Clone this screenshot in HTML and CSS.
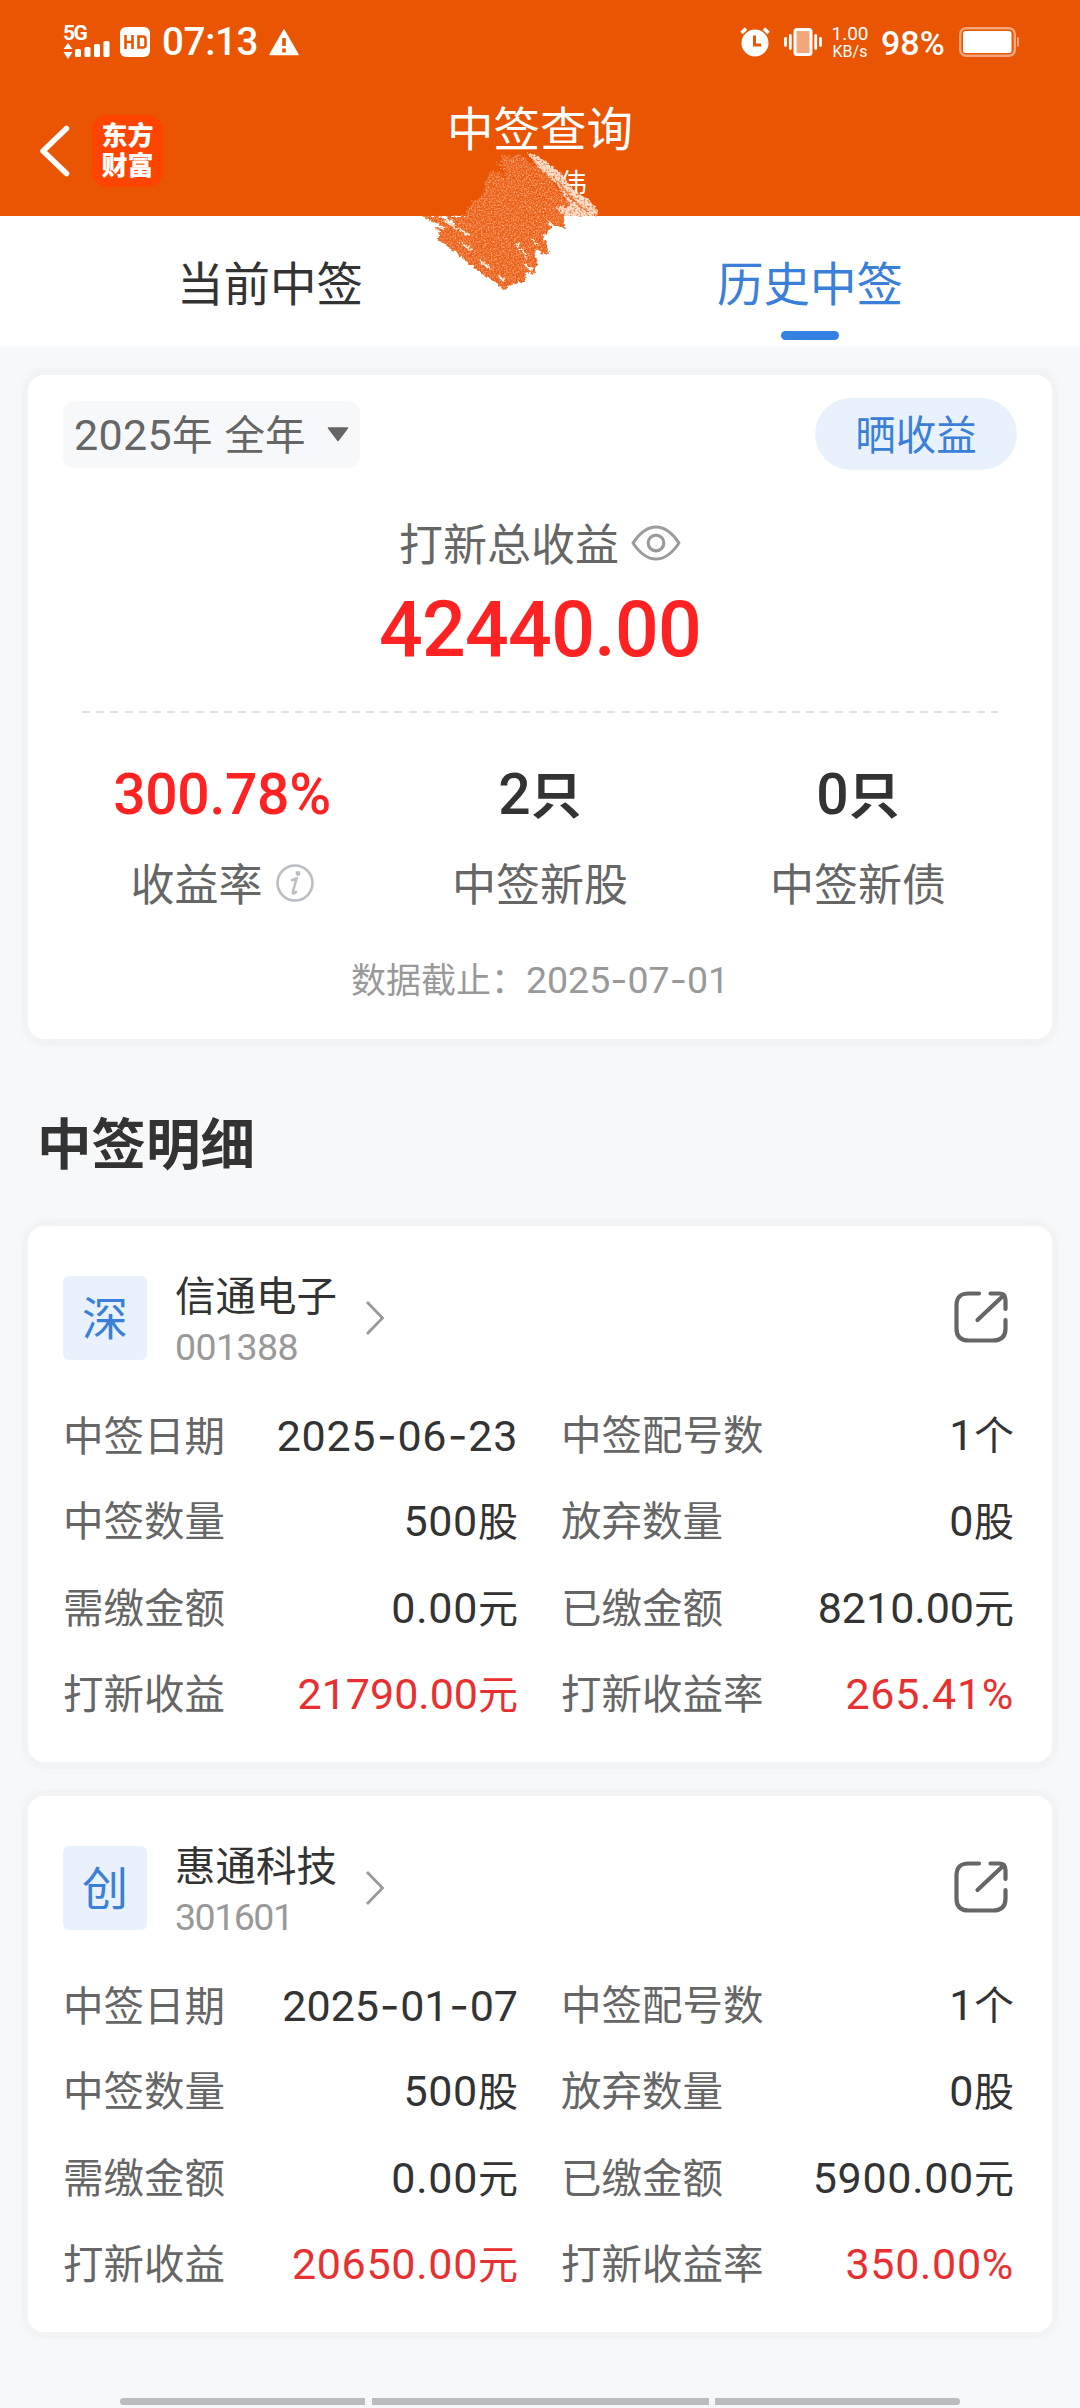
FILE: index.html
```html
<!DOCTYPE html>
<html lang="zh-CN">
<head>
<meta charset="utf-8">
<title>中签查询</title>
<link rel="stylesheet" href="styles.css">
</head>
<body>
<header class="header">
  <div class="status">
    <div class="status-left">
      <div class="signal">
        <span class="signal-type">5G</span>
        <svg width="48" height="16" viewBox="0 0 48 16" fill="#fff"><path d="M5 0 9.500 6H.5zM5 16 9.500 9H.5z"/><rect x="12" y="6" width="6" height="8" rx="1.500"/><rect x="21.500" y="4" width="6" height="10" rx="1.500"/><rect x="31" y="1" width="6" height="13" rx="1.500"/><rect x="40.500" y="-2" width="6" height="16" rx="1.500"/></svg>
      </div>
      <svg class="hd" width="30" height="30" viewBox="0 0 30 30"><rect width="30" height="30" rx="6" fill="#fff"/><path d="M5.500 8v14M12.500 8v14M5.500 15h7M18.500 9.500h4.500q2.500 0 2.500 2.500v6q0 2.500-2.500 2.500h-4.500z" fill="none" stroke="#ea5504" stroke-width="2.600"/></svg>
      <span class="clock">07:13</span>
      <svg class="warn" width="30" height="27" viewBox="0 0 30 27"><path d="M15 1 29 25.500H1z" fill="#fff" stroke="#fff" stroke-width="1.500" stroke-linejoin="round"/><path d="M15 9v8M15 19.500v4" stroke="#ea5504" stroke-width="3.600"/></svg>
    </div>
    <div class="status-right">
      <svg width="30" height="30" viewBox="0 0 30 30"><circle cx="15" cy="16" r="13.500" fill="#fff"/><path d="M1.500 6 6 1.500M24 1.500 28.500 6" stroke="#fff" stroke-width="3.500"/><path d="M14.500 8.500V18H21" fill="none" stroke="#ea5504" stroke-width="3"/></svg>
      <svg class="vibrate" width="38" height="28" viewBox="0 0 38 28"><rect x="11" y="1.500" width="16" height="25" rx="2" fill="#f5a77c" stroke="#fff" stroke-width="3"/><path d="M1.500 10.500v7M6.300 7.500v13M31.700 7.500v13M36.500 10.500v7" stroke="#fff" stroke-width="2.800" stroke-linecap="round"/></svg>
      <div class="speed"><span class="speed-num">1.00</span><span class="speed-unit">KB/s</span></div>
      <span class="percent">98%</span>
      <svg class="battery" width="61" height="30" viewBox="0 0 61 30"><rect x="1.200" y="1.200" width="54.600" height="27.600" rx="6" fill="none" stroke="#f6a67c" stroke-width="2.400"/><rect x="4" y="4" width="48.500" height="22" rx="2.500" fill="#fff"/><rect x="58" y="10.500" width="2" height="9" fill="#f6a67c"/></svg>
    </div>
  </div>
  <div class="titlebar">
    <div class="title-side">
      <svg width="31" height="52" viewBox="0 0 31 52"><path d="M27.500 3.500 4 26l23.500 22.500" fill="none" stroke="#fff" stroke-width="5.500" stroke-linecap="round" stroke-linejoin="round"/></svg>
      <div class="logo"><span>东方</span><span>财富</span></div>
    </div>
    <div class="title-text">
      <h1 class="title">中签查询</h1>
      <p class="owner">伟</p>
    </div>
  </div>
  <svg class="scribble" width="240" height="220" viewBox="0 0 240 220">
    <defs>
      <filter id="crayon" x="-5%" y="-5%" width="110%" height="110%" color-interpolation-filters="sRGB">
        <feTurbulence type="fractalNoise" baseFrequency=".3" numOctaves="2" seed="4" result="wave"/>
        <feDisplacementMap in="SourceGraphic" in2="wave" scale="7" xChannelSelector="R" yChannelSelector="G" result="rough"/>
        <feTurbulence type="fractalNoise" baseFrequency=".6" numOctaves="2" seed="9" result="grain"/>
        <feColorMatrix in="grain" values="0 0 0 0 .98  0 0 0 0 .66  0 0 0 0 .46  2.400 0 0 0 -.95" result="specks"/>
        <feComposite in="specks" in2="rough" operator="in" result="dust"/>
        <feMerge><feMergeNode in="rough"/><feMergeNode in="dust"/></feMerge>
      </filter>
      <filter id="chalk" x="-5%" y="-5%" width="110%" height="110%" color-interpolation-filters="sRGB">
        <feTurbulence type="fractalNoise" baseFrequency=".5" numOctaves="2" seed="3" result="grain"/>
        <feDisplacementMap in="SourceGraphic" in2="grain" scale="5" xChannelSelector="R" yChannelSelector="G" result="rough"/>
        <feColorMatrix in="grain" values="0 0 0 0 .94  0 0 0 0 .5  0 0 0 0 .25  3.500 0 0 0 -1.600" result="specks"/>
        <feComposite in="specks" in2="rough" operator="in" result="dust"/>
        <feMerge><feMergeNode in="rough"/><feMergeNode in="dust"/></feMerge>
      </filter>
    </defs>
    <g filter="url(#chalk)" fill="#ffe1d0">
      <path d="M129 63 140 66 163 83 176 101 191 110 200 121 199 126H163L155 116 171 115 159 94 145 83z"/>
      <path d="M165 103 190 122M155 87 184 119" stroke="#ea6b2b" stroke-width="1.200"/>
    </g>
    <g filter="url(#crayon)">
      <path fill="#ea5f18" d="M103 64 116 67 120 63 134 74 151 87 172 116 157 116 166 128 167 138 153 135 150 142 144 146 150 158 149 165 137 160 139 171 136 184 129 181 126 192 112 194 107 200 97 192 78 180 64 167 38 148 42 145 39 138 50 139 24 126 42 126 61 139 48 126 67 126 72 115 85 105 89 87 95 80 107 86z"/>
      <path d="M97 71 123 94M124 76 157 104M99 82 109 91M92 94 118 118M128 92 148 112M80 112 96 128" stroke="#ea5504" stroke-width="2" fill="none"/>
      <path d="M47 131 71 145M63 152 74 161M82 170 93 179M118 153 129 168M126 173 134 181M101 187 107 191M150 131 156 136M134 149 139 155" stroke="#fff" stroke-width="2.200" fill="none"/>
    </g>
  </svg>
</header>
<nav class="tabs">
  <a class="tab">当前中签</a>
  <a class="tab tab-active">历史中签</a>
</nav>
<main class="content">
  <section class="card summary">
    <div class="toolbar">
      <div class="period"><span class="period-text"><span class="num">2025</span>年 全年</span><svg width="22" height="15" viewBox="0 0 22 15"><path d="M1.500 1h19L11 13.500z" fill="#666" stroke="#666" stroke-width="1.500" stroke-linejoin="round"/></svg></div>
      <a class="share-btn">晒收益</a>
    </div>
    <div class="total-label">打新总收益<svg width="50" height="36" viewBox="0 0 50 36" fill="none" stroke="#9b9b9b"><path d="M2 18C9 7.500 16.500 2 25 2S41 7.500 48 18C41 28.500 33.500 34 25 34S9 28.500 2 18z" stroke-width="3" stroke-linejoin="round"/><circle cx="25" cy="18" r="7.800" stroke-width="3.200"/></svg></div>
    <div class="total">42440.00</div>
    <div class="divider"></div>
    <div class="stats">
      <div class="stat"><div class="stat-value red">300.78%</div><div class="stat-label">收益率<svg width="38" height="38" viewBox="0 0 38 38"><circle cx="19" cy="19" r="17.500" fill="none" stroke="#b9bdc4" stroke-width="2.600"/><circle cx="22" cy="9.500" r="2.400" fill="#b9bdc4"/><path d="M15 16.500q3-1 5.500-2l-3.600 13.200q-.6 3 2 1.300l2-1.800" fill="none" stroke="#b9bdc4" stroke-width="2.500"/></svg></div></div>
      <div class="stat"><div class="stat-value">2<span class="zhi">只</span></div><div class="stat-label">中签新股</div></div>
      <div class="stat"><div class="stat-value">0<span class="zhi">只</span></div><div class="stat-label">中签新债</div></div>
    </div>
    <div class="asof">数据截止：<span class="asof-date">2025<b>-</b>07<b>-</b>01</span></div>
  </section>
  <h2 class="section-title">中签明细</h2>
  <section class="card detail">
    <div class="stock">
      <span class="badge">深</span>
      <div class="stock-id"><span class="name">信通电子</span><span class="code">001388</span></div>
      <svg class="chevron" width="20" height="36" viewBox="0 0 20 36"><path d="M2 2 17.500 18 2 34" fill="none" stroke="#999" stroke-width="2.800"/></svg>
      <svg class="export" width="56" height="52" viewBox="0 0 56 52" fill="none" stroke="#666" stroke-width="4.200" stroke-linecap="round" stroke-linejoin="round"><path d="M26 2.500H15.500Q3.500 2.500 3.500 14.500v23Q3.500 49.500 15.500 49.500H40Q52.500 49.500 52.500 37.500V29M37.500 2.500H46Q52.500 2.500 52.500 9V18M51 4 24.500 29"/></svg>
    </div>
    <dl class="grid">
      <div class="row"><dt>中签日期</dt><dd>2025<b>-</b>06<b>-</b>23</dd></div>
      <div class="row"><dt>中签配号数</dt><dd>1<i>个</i></dd></div>
      <div class="row"><dt>中签数量</dt><dd>500<i>股</i></dd></div>
      <div class="row"><dt>放弃数量</dt><dd>0<i>股</i></dd></div>
      <div class="row"><dt>需缴金额</dt><dd>0.00<i>元</i></dd></div>
      <div class="row"><dt>已缴金额</dt><dd class="tight">8210.00<i>元</i></dd></div>
      <div class="row"><dt>打新收益</dt><dd class="gain tight">21790.00<i>元</i></dd></div>
      <div class="row"><dt>打新收益率</dt><dd class="gain">265.41%</dd></div>
    </dl>
  </section>
  <section class="card detail">
    <div class="stock">
      <span class="badge">创</span>
      <div class="stock-id"><span class="name">惠通科技</span><span class="code code-tight">301601</span></div>
      <svg class="chevron" width="20" height="36" viewBox="0 0 20 36"><path d="M2 2 17.500 18 2 34" fill="none" stroke="#999" stroke-width="2.800"/></svg>
      <svg class="export" width="56" height="52" viewBox="0 0 56 52" fill="none" stroke="#666" stroke-width="4.200" stroke-linecap="round" stroke-linejoin="round"><path d="M26 2.500H15.500Q3.500 2.500 3.500 14.500v23Q3.500 49.500 15.500 49.500H40Q52.500 49.500 52.500 37.500V29M37.500 2.500H46Q52.500 2.500 52.500 9V18M51 4 24.500 29"/></svg>
    </div>
    <dl class="grid">
      <div class="row"><dt>中签日期</dt><dd class="tight">2025<b>-</b>01<b>-</b>07</dd></div>
      <div class="row"><dt>中签配号数</dt><dd>1<i>个</i></dd></div>
      <div class="row"><dt>中签数量</dt><dd>500<i>股</i></dd></div>
      <div class="row"><dt>放弃数量</dt><dd>0<i>股</i></dd></div>
      <div class="row"><dt>需缴金额</dt><dd>0.00<i>元</i></dd></div>
      <div class="row"><dt>已缴金额</dt><dd>5900.00<i>元</i></dd></div>
      <div class="row"><dt>打新收益</dt><dd class="gain">20650.00<i>元</i></dd></div>
      <div class="row"><dt>打新收益率</dt><dd class="gain">350.00%</dd></div>
    </dl>
  </section>
</main>
<footer class="gesture"><span></span><span></span><span></span></footer>
</body>
</html>
```
FILE: styles.css
```css
* { box-sizing: border-box; margin: 0; padding: 0; }
body {
  width: 1080px;
  height: 2408px;
  display: flex;
  flex-direction: column;
  overflow: hidden;
  background: #f7f8fa;
  color: #333;
  font-family: Roboto, "Noto Sans CJK SC", sans-serif;
}
svg { display: block; flex: none; }
i { font-style: normal; }

/* header */
.header { position: relative; height: 216px; background: #ea5504; color: #fff; }
.status { height: 84px; display: flex; justify-content: space-between; padding: 0 60px 0 63px; align-items: center; }
.status-left, .status-right { display: flex; align-items: center; }
.signal { width: 48px; display: flex; flex-direction: column; }
.signal svg { overflow: visible; }
.signal-type { height: 18px; font-size: 21px; line-height: 17px; font-weight: 700; letter-spacing: -1.500px; }
.hd { margin-left: 9px; }
.clock { width: 105px; margin-left: 12px; font-size: 38.500px; line-height: 42px; font-weight: 500; letter-spacing: -.3px; }
.warn { margin-left: 2px; }
.vibrate { margin-left: 14px; }
.speed { width: 38px; margin-left: 9px; display: flex; flex-direction: column; align-items: center; }
.speed-num { font-size: 19px; line-height: 19px; }
.speed-unit { font-size: 16px; line-height: 17px; }
.percent { width: 69px; margin-left: 12px; font-size: 34px; line-height: 34px; font-weight: 500; white-space: nowrap; padding-top: 2px; }
.battery { margin-left: 9px; }
.titlebar { height: 132px; display: grid; grid-template-columns: 1fr auto 1fr; }
.title-side { display: flex; align-items: center; gap: 22px; padding: 2px 0 0 39px; }
.logo {
  width: 71px; height: 72px; border-radius: 15px; background: #ff4400;
  display: flex; flex-direction: column; align-items: center; justify-content: center;
  font-size: 26px; line-height: 30px; font-weight: 900;
}
.title-text { display: flex; flex-direction: column; align-items: center; padding-top: 18px; }
.title { font-size: 46.500px; line-height: 56px; font-weight: 400; white-space: nowrap; }
.owner { font-size: 28px; line-height: 54px; align-self: flex-end; margin-right: 46px; }
.scribble { position: absolute; left: 398px; top: 90px; z-index: 2; }

/* tabs */
.tabs { height: 130px; display: grid; grid-template-columns: 1fr 1fr; background: #fff; }
.tab { display: flex; flex-direction: column; align-items: center; padding-top: 40px; font-size: 46.500px; line-height: 58px; }
.tab-active { color: #3a80d8; }
.tab-active::after { content: ""; width: 58px; height: 9px; margin-top: 17px; border-radius: 5px; background: #3581e2; }

/* cards */
.content { padding: 29px 28px 0; }
.card { background: #fff; border-radius: 16px; box-shadow: 0 0 0 7px rgba(0, 0, 0, .012), 0 0 22px 4px rgba(0, 0, 0, .018); }
.summary { height: 664px; padding: 23px 35px 0; }
.toolbar { height: 72px; display: flex; justify-content: space-between; align-items: center; }
.period { width: 297px; height: 67px; padding: 0 11px; display: flex; align-items: center; justify-content: space-between; border-radius: 12px; background: #f7f8fa; color: #666; }
.period-text { font-size: 40.500px; line-height: 66px; padding-top: 2px; word-spacing: 2px; white-space: nowrap; }
.period-text .num { font-size: 43px; letter-spacing: .3px; }
.share-btn { width: 202px; height: 72px; border-radius: 36px; background: #e9f2fc; color: #3a80d8; font-size: 40.500px; line-height: 76px; text-align: center; }
.total-label { height: 60px; margin-top: 46px; display: flex; align-items: center; justify-content: center; gap: 12px; font-size: 44px; line-height: 60px; color: #666; }
.total-label svg { margin-top: -6px; }
.total { height: 90px; margin-top: 9px; font-size: 77px; line-height: 90px; font-weight: 500; letter-spacing: -.7px; color: #ff2222; text-align: center; }
.divider { height: 2px; margin: 36px 19px 0; background: repeating-linear-gradient(90deg, #dfe2e5 0 8px, transparent 8px 14.200px); }
.stats { display: grid; grid-template-columns: 1fr 1fr 1fr; margin-top: 47px; text-align: center; }
.stat-value { height: 70px; font-size: 57px; line-height: 70px; font-weight: 500; }
.zhi { font-size: 51px; font-weight: 700; }
.red { color: #ff2222; letter-spacing: -.3px; }
.stat-label { height: 60px; margin-top: 26px; display: flex; align-items: center; justify-content: center; gap: 13px; font-size: 44px; line-height: 60px; color: #666; }
.stat-label svg { margin-top: -6px; }
.asof { height: 50px; margin-top: 39px; font-size: 35px; line-height: 50px; color: #999; text-align: center; }
.asof-date { font-size: 37.500px; }
.section-title { height: 187px; padding: 67px 0 0 9px; font-size: 54.500px; line-height: 78px; font-weight: 700; }

/* wide hyphen between date parts */
.asof-date b, dd b { font-family: Inter, sans-serif; font-weight: 400; letter-spacing: 0; }
dd b { padding: 0 .7px; }

/* winning records */
.detail { height: 536px; margin-bottom: 34px; padding: 50px 35px 0; }
.stock { height: 84px; display: flex; align-items: center; }
.badge { width: 84px; height: 84px; border-radius: 6px; background: #e9f2fc; color: #3a80d8; font-size: 46px; line-height: 87px; text-align: center; }
.stock-id { width: 162px; margin-left: 28px; padding-top: 10px; display: flex; flex-direction: column; }
.name { font-size: 40.500px; line-height: 48px; white-space: nowrap; }
.code { font-size: 37.500px; line-height: 52px; letter-spacing: -.6px; color: #999; }
.code-tight { letter-spacing: -1.500px; }
.chevron { margin-left: 28px; }
.export { margin: -2px 8px 0 auto; }
.grid { margin-top: 32px; display: grid; grid-template-columns: 455px 453px; column-gap: 43px; grid-auto-rows: 86.400px; }
.row { display: flex; justify-content: space-between; align-items: baseline; line-height: 86.400px; white-space: nowrap; }
.row dt { font-size: 40.500px; color: #666; }
.row dd { font-size: 43px; color: #333; letter-spacing: .7px; }
.row dd.tight { letter-spacing: 0; }
.row dd i { font-size: 40px; letter-spacing: 0; }
.row .gain { color: #e93030; }

/* gesture bar */
.gesture { height: 10px; margin: auto 120px 0; display: grid; grid-template-columns: 245px 337px 245px; justify-content: space-between; }
.gesture span { height: 7px; background: #bbbcbe; }
.gesture span:first-child { border-radius: 4px 0 0 4px; }
.gesture span:last-child { border-radius: 0 4px 4px 0; }
```
